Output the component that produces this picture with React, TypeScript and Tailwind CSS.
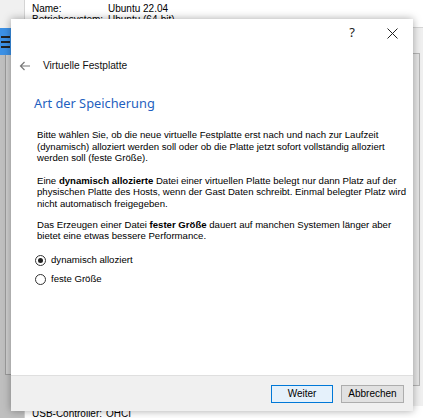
import React from 'react'

const ui = { fontFamily: '"Liberation Sans", Arial, sans-serif' }
const head = { fontFamily: '"Noto Sans", "Liberation Sans", sans-serif' }

function Radio({ checked, label }: { checked?: boolean; label: string }) {
  return (
    <label className="flex h-[11px] items-center gap-[5px] text-[9.6px] text-black">
      <span className="flex h-[11px] w-[11px] items-center justify-center rounded-full border border-[#333] bg-white">
        {checked && <span className="h-[5px] w-[5px] rounded-full bg-[#222]" />}
      </span>
      {label}
    </label>
  )
}

export default function App() {
  return (
    <div className="relative h-[418px] w-[423px] overflow-hidden bg-[#f0f0f0]" style={ui}>
      {/* main window behind the dialog */}
      <div className="absolute inset-0 flex">
        <div className="flex w-[25px] flex-col border-r border-[#d4d4d4]">
          <div className="h-[28px] bg-[#f0f0f0]" />
          <div className="flex h-[27px] flex-col justify-center gap-[3px] bg-[#3c91e6] pl-[1px]">
            <span className="h-[2px] w-[9px] bg-[#222]" />
            <span className="h-[2px] w-[9px] bg-[#222]" />
            <span className="h-[2px] w-[9px] bg-[#222]" />
          </div>
          <div className="flex-1 bg-[#bfbfbf] pl-[5px] pb-[43px]">
            <div className="h-full border-b border-l border-[#9a9a9a] bg-[#cfcfcf]" />
          </div>
        </div>
        <div className="flex flex-1 flex-col bg-white">
          <div className="h-[28px] whitespace-nowrap border-b border-[#d6d6d6] pl-[7px] pt-[3px] text-[10px] leading-[11px] text-black">
            <div className="flex"><span className="w-[76px]">Name:</span><span>Ubuntu 22.04</span></div>
            <div className="flex"><span className="w-[76px]">Betriebssystem:</span><span>Ubuntu (64-bit)</span></div>
          </div>
          <div className="flex-1 bg-[#f0f0f0] pr-[3px] pt-[25px] pb-[20px]">
            <div className="ml-auto h-full w-[8px] border border-[#b5b5b5] bg-[#e6e6e6]" />
          </div>
          <div className="flex h-[12px] items-start overflow-hidden whitespace-nowrap bg-white pl-[7px] pt-[2px] text-[10px] leading-[11px] text-black">
            <span className="w-[74px]">USB-Controller:</span>
            <span>OHCI</span>
          </div>
        </div>
      </div>

      {/* dialog window */}
      <div className="absolute left-[11px] top-[19px] flex h-[392px] w-[402px] flex-col bg-white shadow-[0_0_8px_rgba(0,0,0,0.35)]">
        <div className="flex h-[28px] items-center justify-end text-[#222]">
          <span className="mr-[32px] text-[13px]" style={head}>?</span>
          <svg width="11" height="11" viewBox="0 0 11 11" className="mr-[15px]">
            <path d="M0.5 0.5 L10.5 10.5 M10.5 0.5 L0.5 10.5" stroke="#222" strokeWidth="1" />
          </svg>
        </div>
        <div className="flex h-[38px] items-center pl-[8px]">
          <svg width="12" height="10" viewBox="0 0 12 10">
            <path d="M11 5 H1.5 M5.5 1 L1.5 5 L5.5 9" stroke="#777" strokeWidth="1.2" fill="none" />
          </svg>
          <span className="ml-[12px] text-[10.2px] text-[#111]">Virtuelle Festplatte</span>
        </div>
        <div className="flex-1 pl-[23px] pr-[20px]">
          <h1 className="mt-[9px] text-[12.8px] leading-[18px] text-[#1f5fc0]" style={head}>Art der Speicherung</h1>
          <div className="mt-[17px] flex flex-col gap-[11px] whitespace-nowrap pl-[3px] text-[9.6px] leading-[11.6px] text-black">
            <p>
              Bitte wählen Sie, ob die neue virtuelle Festplatte erst nach und nach zur Laufzeit<br />
              (dynamisch) alloziert werden soll oder ob die Platte jetzt sofort vollständig alloziert<br />
              werden soll (feste Größe).
            </p>
            <p>
              Eine <b>dynamisch allozierte</b> Datei einer virtuellen Platte belegt nur dann Platz auf der<br />
              physischen Platte des Hosts, wenn der Gast Daten schreibt. Einmal belegter Platz wird<br />
              nicht automatisch freigegeben.
            </p>
            <p className="-mt-[2px]">
              Das Erzeugen einer Datei <b>fester Größe</b> dauert auf manchen Systemen länger aber<br />
              bietet eine etwas bessere Performance.
            </p>
          </div>
          <div className="mt-[13px] flex flex-col gap-[8px] pl-[1px]">
            <Radio checked label="dynamisch alloziert" />
            <Radio label="feste Größe" />
          </div>
        </div>
        <div className="flex h-[36px] items-center justify-end gap-[8px] border-t border-[#dfdfdf] bg-[#f0f0f0] pr-[9px]">
          <button className="h-[18px] w-[62px] border border-[#0078d7] bg-[#e5f1fb] text-[10px] text-black">Weiter</button>
          <button className="h-[18px] w-[63px] border border-[#adadad] bg-[#e1e1e1] text-[10px] text-black">Abbrechen</button>
        </div>
      </div>
    </div>
  )
}
